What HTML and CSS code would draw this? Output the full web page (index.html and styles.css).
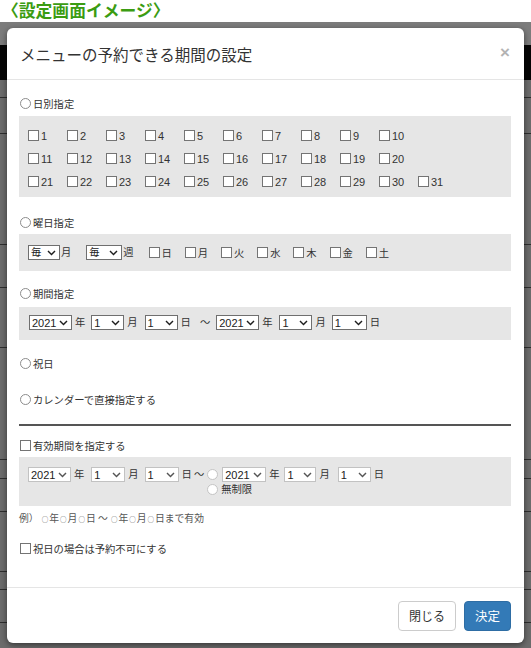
FILE: index.html
```html
<!DOCTYPE html>
<html lang="ja">
<head>
<meta charset="utf-8">
<title>設定画面イメージ</title>
<link rel="stylesheet" href="styles.css">
</head>
<body>
<h1 class="caption">〈設定画面イメージ〉</h1>
<div class="stage">
  <div class="modal">
    <div class="modal-header">
      <h2 class="modal-title">メニューの予約できる期間の設定</h2>
      <span class="close">×</span>
    </div>
    <div class="modal-body">
      <div class="opt opt-first"><i class="rd"></i><span>日別指定</span></div>
      <div class="panel panel-days">
        <div class="day-row">
          <span class="ck"><i class="cb"></i>1</span><span class="ck"><i class="cb"></i>2</span><span class="ck"><i class="cb"></i>3</span><span class="ck"><i class="cb"></i>4</span><span class="ck"><i class="cb"></i>5</span><span class="ck"><i class="cb"></i>6</span><span class="ck"><i class="cb"></i>7</span><span class="ck"><i class="cb"></i>8</span><span class="ck"><i class="cb"></i>9</span><span class="ck"><i class="cb"></i>10</span>
        </div>
        <div class="day-row">
          <span class="ck"><i class="cb"></i>11</span><span class="ck"><i class="cb"></i>12</span><span class="ck"><i class="cb"></i>13</span><span class="ck"><i class="cb"></i>14</span><span class="ck"><i class="cb"></i>15</span><span class="ck"><i class="cb"></i>16</span><span class="ck"><i class="cb"></i>17</span><span class="ck"><i class="cb"></i>18</span><span class="ck"><i class="cb"></i>19</span><span class="ck"><i class="cb"></i>20</span>
        </div>
        <div class="day-row">
          <span class="ck"><i class="cb"></i>21</span><span class="ck"><i class="cb"></i>22</span><span class="ck"><i class="cb"></i>23</span><span class="ck"><i class="cb"></i>24</span><span class="ck"><i class="cb"></i>25</span><span class="ck"><i class="cb"></i>26</span><span class="ck"><i class="cb"></i>27</span><span class="ck"><i class="cb"></i>28</span><span class="ck"><i class="cb"></i>29</span><span class="ck"><i class="cb"></i>30</span><span class="ck"><i class="cb"></i>31</span>
        </div>
      </div>

      <div class="opt opt-week"><i class="rd"></i><span>曜日指定</span></div>
      <div class="panel panel-week">
        <span class="sel w32"><span class="jp">毎</span><svg class="chev" viewBox="0 0 9 6"><path d="M1 1l3.5 3.6L8 1"/></svg></span><span class="u u-week">月</span>
        <span class="sel w36"><span class="jp">毎</span><svg class="chev" viewBox="0 0 9 6"><path d="M1 1l3.5 3.6L8 1"/></svg></span><span class="u u-week">週</span>
        <span class="wk"><i class="cb"></i>日</span><span class="wk"><i class="cb"></i>月</span><span class="wk"><i class="cb"></i>火</span><span class="wk"><i class="cb"></i>水</span><span class="wk"><i class="cb"></i>木</span><span class="wk"><i class="cb"></i>金</span><span class="wk"><i class="cb"></i>土</span>
      </div>

      <div class="opt opt-period"><i class="rd"></i><span>期間指定</span></div>
      <div class="panel panel-period">
        <div class="date-row">
          <span class="sel w43"><span>2021</span><svg class="chev" viewBox="0 0 9 6"><path d="M1 1l3.5 3.6L8 1"/></svg></span><span class="u">年</span>
          <span class="sel w33"><span>1</span><svg class="chev" viewBox="0 0 9 6"><path d="M1 1l3.5 3.6L8 1"/></svg></span><span class="u u7">月</span>
          <span class="sel w33"><span>1</span><svg class="chev" viewBox="0 0 9 6"><path d="M1 1l3.5 3.6L8 1"/></svg></span><span class="u">日</span>
          <span class="u">〜</span>
          <span class="sel w43"><span>2021</span><svg class="chev" viewBox="0 0 9 6"><path d="M1 1l3.5 3.6L8 1"/></svg></span><span class="u u7">年</span>
          <span class="sel w33"><span>1</span><svg class="chev" viewBox="0 0 9 6"><path d="M1 1l3.5 3.6L8 1"/></svg></span><span class="u">月</span>
          <span class="sel w35"><span>1</span><svg class="chev" viewBox="0 0 9 6"><path d="M1 1l3.5 3.6L8 1"/></svg></span><span class="u">日</span>
        </div>
      </div>

      <div class="opt opt-holiday"><i class="rd"></i><span>祝日</span></div>
      <div class="opt opt-cal"><i class="rd"></i><span>カレンダーで直接指定する</span></div>
      <hr class="rule">

      <div class="opt opt-valid"><i class="cb"></i><span>有効期間を指定する</span></div>
      <div class="panel panel-valid">
        <div class="valid-from">
          <span class="sel lite w43"><span>2021</span><svg class="chev" viewBox="0 0 9 6"><path d="M1 1l3.5 3.6L8 1"/></svg></span><span class="u u7">年</span>
          <span class="sel lite w34"><span>1</span><svg class="chev" viewBox="0 0 9 6"><path d="M1 1l3.5 3.6L8 1"/></svg></span><span class="u">月</span>
          <span class="sel lite w34"><span>1</span><svg class="chev" viewBox="0 0 9 6"><path d="M1 1l3.5 3.6L8 1"/></svg></span><span class="u u2">日</span>
          <span class="u u3">〜</span>
        </div>
        <div class="valid-to">
          <div class="to-row">
            <i class="rd rd-lite"></i>
            <span class="sel lite w44"><span>2021</span><svg class="chev" viewBox="0 0 9 6"><path d="M1 1l3.5 3.6L8 1"/></svg></span><span class="u u5">年</span>
            <span class="sel lite w32"><span>1</span><svg class="chev" viewBox="0 0 9 6"><path d="M1 1l3.5 3.6L8 1"/></svg></span><span class="u u8">月</span>
            <span class="sel lite w33"><span>1</span><svg class="chev" viewBox="0 0 9 6"><path d="M1 1l3.5 3.6L8 1"/></svg></span><span class="u">日</span>
          </div>
          <div class="to-row"><i class="rd rd-lite"></i><span class="nolimit">無制限</span></div>
        </div>
      </div>
      <p class="example">例）&nbsp;<span class="o">○</span>年<span class="o">○</span>月<span class="o">○</span>日 〜 <span class="o">○</span>年<span class="o">○</span>月<span class="o">○</span>日まで有効</p>

      <div class="opt opt-closed"><i class="cb"></i><span>祝日の場合は予約不可にする</span></div>
    </div>
    <div class="modal-footer">
      <button class="btn btn-default" type="button">閉じる</button>
      <button class="btn btn-primary" type="button">決定</button>
    </div>
  </div>
</div>
</body>
</html>
```

FILE: styles.css
```css
* { box-sizing: border-box; margin: 0; padding: 0; }

body {
  width: 531px;
  height: 648px;
  overflow: hidden;
  background: #fff;
  color: #333;
  font-family: "Liberation Sans", "Noto Sans CJK JP", sans-serif;
}

.caption {
  height: 22px;
  padding-left: 2px;
  font-family: "Noto Sans CJK JP", sans-serif;
  font-size: 16.8px;
  line-height: 20px;
  font-weight: bold;
  color: #3b9c12;
  white-space: nowrap;
}

.stage {
  height: 626px;
  padding: 6px 7px 0;
  background: linear-gradient(to bottom,
    #7c7c7c 0 23px,
    #050505 23px 58px,
    #6c6c6c 58px 75px, #2e2e2e 75px 76px,
    #6c6c6c 76px 111px, #2e2e2e 111px 112px,
    #6c6c6c 112px 222px, #2e2e2e 222px 223px,
    #6c6c6c 223px 265px, #2e2e2e 265px 266px,
    #6c6c6c 266px 325px, #2e2e2e 325px 326px,
    #6c6c6c 326px 437px, #2e2e2e 437px 438px,
    #6c6c6c 438px 456px, #2e2e2e 456px 457px,
    #6c6c6c 457px 489px, #2e2e2e 489px 490px,
    #6c6c6c 490px 549px, #2e2e2e 549px 550px,
    #6c6c6c 550px 567px, #2e2e2e 567px 568px,
    #6c6c6c 568px 600px, #2e2e2e 600px 601px,
    #6c6c6c 601px);
}

.modal {
  width: 517px;
  height: 615px;
  background: #fff;
  border-radius: 6px;
  box-shadow: 0 2px 6px rgba(0, 0, 0, 0.5);
  display: flex;
  flex-direction: column;
}

.modal-header {
  height: 52px;
  border-bottom: 1px solid #e5e5e5;
  display: flex;
  align-items: center;
  justify-content: space-between;
  padding: 0 14px 0 13px;
}

.modal-title {
  font-family: "Noto Sans CJK JP", sans-serif;
  font-size: 15.5px;
  font-weight: normal;
  line-height: 1;
  color: #333;
  margin-top: 3px;
}

.close {
  font-family: "Liberation Sans", sans-serif;
  font-size: 17px;
  font-weight: bold;
  line-height: 1;
  color: #b3b3b3;
  margin-top: -3px;
}

.modal-body {
  flex: 1;
  padding: 0 13px 0 12px;
  font-size: 10.3px;
}

.opt {
  height: 20px;
  display: flex;
  align-items: center;
  padding-left: 1px;
  font-family: "Noto Sans CJK JP", sans-serif;
  font-size: 10.3px;
  color: #333;
}

.opt-first { margin-top: 13px; }
.opt-week { margin-top: 15px; }
.opt-period { margin-top: 12px; }
.opt-holiday { margin-top: 13px; }
.opt-cal { margin-top: 16px; }
.opt-valid { margin-top: 9px; }
.opt-closed { margin-top: 10px; }

.rd {
  width: 11px;
  height: 11px;
  border: 1px solid #8c8c8c;
  border-radius: 50%;
  background: #fff;
  margin-right: 2px;
  flex: none;
}

.rd-lite { border-color: #c4c4c4; }

.cb {
  width: 11px;
  height: 11px;
  border: 1px solid #747474;
  background: #fff;
  margin-right: 2px;
  flex: none;
}

.panel {
  background: #e6e6e6;
  padding-left: 9px;
}

.panel-days {
  margin-top: 3px;
  height: 81px;
  padding-top: 8px;
}

.day-row {
  height: 23px;
  display: flex;
  align-items: center;
}

.ck {
  width: 39px;
  display: flex;
  align-items: center;
  font-size: 11px;
  color: #333;
}

.panel-week {
  margin-top: 2px;
  height: 37px;
  display: flex;
  align-items: center;
}

.sel {
  height: 15px;
  display: inline-flex;
  align-items: center;
  justify-content: space-between;
  padding: 0 3px 0 2px;
  border: 1px solid #6f6f6f;
  background: #fff;
  font-size: 11px;
  color: #222;
  flex: none;
}

.sel .jp {
  font-family: "Noto Sans CJK JP", sans-serif;
  font-size: 10.3px;
  line-height: 1;
}

.sel.lite {
  border-color: #c2c2c2;
}

.chev {
  width: 9px;
  height: 6px;
  fill: none;
  stroke: #1e1e1e;
  stroke-width: 1.4;
}

.lite .chev { stroke: #555; }

.w32 { width: 32px; }
.w33 { width: 33px; }
.w34 { width: 34px; }
.w35 { width: 35px; }
.w36 { width: 36px; }
.w43 { width: 43px; }
.w44 { width: 44px; }

.u {
  font-family: "Noto Sans CJK JP", sans-serif;
  font-size: 10.3px;
  line-height: 1;
  margin: 0 6px 0 3px;
  color: #333;
}

.u7 { margin-right: 7px; }
.u8 { margin-right: 8px; }
.u5 { margin-right: 5px; }
.u2 { margin-right: 2px; }
.u3 { margin-right: 3px; margin-left: 0; }

.u-week {
  margin: 0 15px 0 1px;
}

.wk {
  width: 36.2px;
  display: flex;
  align-items: center;
  font-family: "Noto Sans CJK JP", sans-serif;
  font-size: 10.3px;
}

.panel-period {
  margin-top: 4px;
  height: 33px;
  padding-top: 8px;
}

.date-row {
  display: flex;
  align-items: center;
  height: 15px;
  margin-left: 1px;
}

.rule {
  margin-top: 15px;
  border: none;
  height: 2px;
  background: #555;
}

.panel-valid {
  margin-top: 2px;
  height: 49px;
  padding-top: 10px;
  display: flex;
  align-items: flex-start;
}

.valid-from {
  display: flex;
  align-items: center;
  height: 15px;
}

.valid-to {
  display: flex;
  flex-direction: column;
}

.to-row {
  display: flex;
  align-items: center;
  height: 15px;
}

.to-row .rd { margin-right: 4px; }

.nolimit {
  font-family: "Noto Sans CJK JP", sans-serif;
  font-size: 10.3px;
  line-height: 1;
  color: #333;
  margin-left: -1px;
}

.example {
  margin-top: 2px;
  height: 20px;
  line-height: 20px;
  font-family: "Noto Sans CJK JP", sans-serif;
  font-size: 9.8px;
  color: #555;
}

.example .o {
  font-size: 6.5px;
  margin: 0 1px;
}

.modal-footer {
  height: 56px;
  border-top: 1px solid #e5e5e5;
  display: flex;
  justify-content: flex-end;
  align-items: flex-start;
  padding: 13px 13px 0 0;
  gap: 8px;
}

.btn {
  height: 30px;
  border-radius: 4px;
  font-family: "Noto Sans CJK JP", sans-serif;
  font-size: 12px;
  line-height: 1;
  border: 1px solid #ccc;
  background: #fff;
  color: #333;
}

.btn-default { width: 58px; }

.btn-primary {
  width: 47px;
  background: #337ab7;
  border-color: #2e6da4;
  color: #fff;
  font-size: 12.5px;
}
```
